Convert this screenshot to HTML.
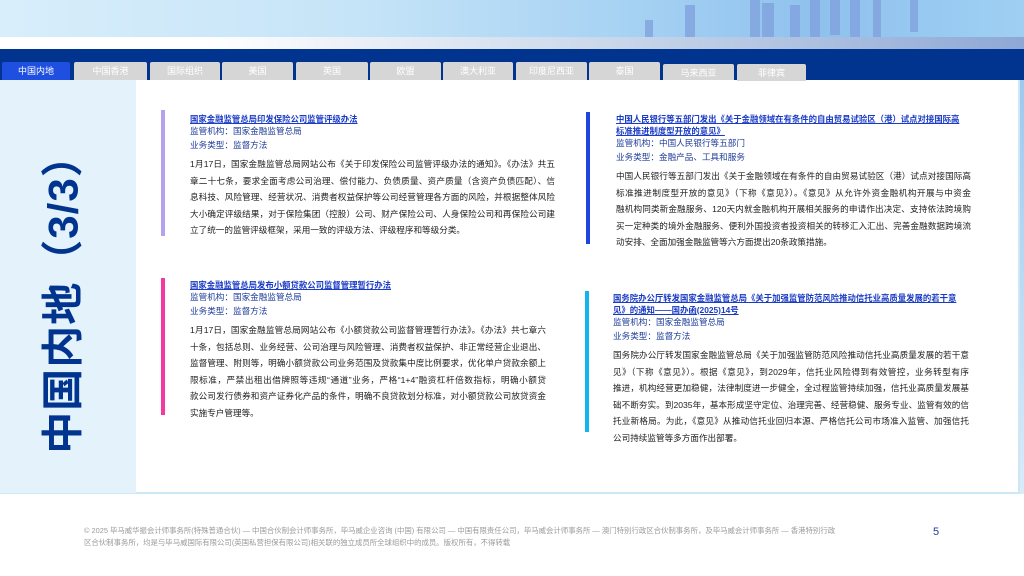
<!DOCTYPE html>
<html><head><meta charset="utf-8"><style>
*{margin:0;padding:0;box-sizing:border-box}
body{width:1024px;height:576px;overflow:hidden;background:#fff;position:relative;font-family:"Liberation Sans","Noto Sans CJK SC",sans-serif}
.hdr{position:absolute;left:0;top:0;width:1024px;height:44px;background:linear-gradient(90deg,#d8eefb 0%,#c6e4f8 35%,#a8d3f3 60%,#8fc1ee 80%,#9fd0f3 100%)}
.fade{position:absolute;left:0;top:37px;width:1024px;height:12px;background:linear-gradient(90deg,#fff 0%,#fff 20%,#c9d7ea 60%,#8ea8d6 100%)}
.bar{position:absolute;background:#7f9fdc;opacity:.75}
.dark{position:absolute;left:0;top:49px;width:1024px;height:31px;background:#00348f}
.tab{position:absolute;top:62px;height:18px;background:#d6d6d6;color:#fff;font-size:9px;text-align:center;line-height:18px;border-radius:2px 2px 0 0}
.tab.on{background:#1f4fe0;top:62px}
.left{position:absolute;left:0;top:80px;width:136px;height:413px;background:#e3f2fb}
.main{position:absolute;left:0;top:80px;width:1020px;height:414px;border-bottom:2px solid #cfe6f6;border-right:2px solid #cfe6f6}
.rstrip{position:absolute;left:1020px;top:80px;width:4px;height:414px;background:linear-gradient(#9cc9ef,#d9ecfa)}
.vt{position:absolute;left:60px;top:294px;transform:translate(-50%,-50%) rotate(-90deg);white-space:nowrap;font-size:42px;font-weight:bold;color:#00348f;letter-spacing:1px}
.card{position:absolute;font-size:8.6px;color:#222}
.bd{position:absolute;width:4px}
.t{color:#1a3bc4;text-decoration:underline;font-size:8.4px;line-height:12px;font-weight:bold;white-space:nowrap}
.m{color:#1f3d99;font-size:8.6px;line-height:13.5px;white-space:nowrap}
.b{margin-top:4px;font-size:8.6px;line-height:16.6px}
.b div{text-align:justify;text-align-last:justify;white-space:nowrap}
.b div.l{text-align-last:left}
.foot{position:absolute;left:84px;top:525px;width:760px;font-size:7.4px;line-height:11.5px;color:#9a9a9a;white-space:nowrap}
.pg{position:absolute;left:933px;top:526px;font-size:11px;color:#1f3d99}
</style></head><body>
<div class="hdr"></div>
<div class="bar" style="left:645px;top:20px;width:8px;height:24px"></div>
<div class="bar" style="left:685px;top:5px;width:10px;height:39px"></div>
<div class="bar" style="left:750px;top:0;width:10px;height:44px"></div>
<div class="bar" style="left:762px;top:3px;width:12px;height:41px"></div>
<div class="bar" style="left:790px;top:5px;width:10px;height:39px"></div>
<div class="bar" style="left:810px;top:0;width:10px;height:44px"></div>
<div class="bar" style="left:830px;top:0;width:10px;height:35px"></div>
<div class="bar" style="left:850px;top:0;width:10px;height:40px"></div>
<div class="bar" style="left:873px;top:0;width:8px;height:38px"></div>
<div class="bar" style="left:910px;top:0;width:8px;height:32px"></div>
<div class="fade"></div>
<div class="dark"></div>
<div class="tab on" style="left:2px;width:68px">中国内地</div>
<div class="tab" style="left:74px;width:73px">中国香港</div>
<div class="tab" style="left:150px;width:70px">国际组织</div>
<div class="tab" style="left:222px;width:71px">美国</div>
<div class="tab" style="left:296px;width:72px">英国</div>
<div class="tab" style="left:370px;width:71px">欧盟</div>
<div class="tab" style="left:443px;width:70px">澳大利亚</div>
<div class="tab" style="left:516px;width:71px">印度尼西亚</div>
<div class="tab" style="left:589px;width:71px">泰国</div>
<div class="tab" style="left:663px;width:71px;top:64px;height:16px">马来西亚</div>
<div class="tab" style="left:737px;width:69px;top:64px;height:17px">菲律宾</div>
<div class="main"></div>
<div class="left"></div>
<div class="rstrip"></div>
<div class="vt">中国内地（3/3）</div>

<div class="bd" style="left:161px;top:110px;height:126px;background:#b6a1ee"></div>
<div class="card" style="left:190px;top:113px;width:365px">
<div class="t">国家金融监管总局印发保险公司监管评级办法</div>
<div class="m">监管机构：国家金融监管总局</div>
<div class="m">业务类型：监督方法</div>
<div class="b"><div>1月17日，国家金融监管总局网站公布《关于印发保险公司监管评级办法的通知》。《办法》共五</div><div>章二十七条，要求全面考虑公司治理、偿付能力、负债质量、资产质量（含资产负债匹配）、信</div><div>息科技、风险管理、经营状况、消费者权益保护等公司经营管理各方面的风险，并根据整体风险</div><div>大小确定评级结果，对于保险集团（控股）公司、财产保险公司、人身保险公司和再保险公司建</div><div class="l">立了统一的监管评级框架，采用一致的评级方法、评级程序和等级分类。</div></div>
</div>

<div class="bd" style="left:586px;top:112px;height:132px;background:#1f45e0"></div>
<div class="card" style="left:616px;top:113px;width:355px">
<div class="t">中国人民银行等五部门发出《关于金融领域在有条件的自由贸易试验区（港）试点对接国际高<br>标准推进制度型开放的意见》</div>
<div class="m">监管机构：中国人民银行等五部门</div>
<div class="m">业务类型：金融产品、工具和服务</div>
<div class="b"><div>中国人民银行等五部门发出《关于金融领域在有条件的自由贸易试验区（港）试点对接国际高</div><div>标准推进制度型开放的意见》（下称《意见》）。《意见》从允许外资金融机构开展与中资金</div><div>融机构同类新金融服务、120天内就金融机构开展相关服务的申请作出决定、支持依法跨境购</div><div>买一定种类的境外金融服务、便利外国投资者投资相关的转移汇入汇出、完善金融数据跨境流</div><div class="l">动安排、全面加强金融监管等六方面提出20条政策措施。</div></div>
</div>

<div class="bd" style="left:161px;top:278px;height:137px;background:#f23aa0"></div>
<div class="card" style="left:190px;top:279px;width:356px">
<div class="t">国家金融监管总局发布小额贷款公司监督管理暂行办法</div>
<div class="m">监管机构：国家金融监管总局</div>
<div class="m">业务类型：监督方法</div>
<div class="b"><div>1月17日，国家金融监管总局网站公布《小额贷款公司监督管理暂行办法》。《办法》共七章六</div><div>十条，包括总则、业务经营、公司治理与风险管理、消费者权益保护、非正常经营企业退出、</div><div>监督管理、附则等，明确小额贷款公司业务范围及贷款集中度比例要求，优化单户贷款余额上</div><div>限标准，严禁出租出借牌照等违规“通道”业务，严格“1+4”融资杠杆倍数指标，明确小额贷</div><div>款公司发行债券和资产证券化产品的条件，明确不良贷款划分标准，对小额贷款公司放贷资金</div><div class="l">实施专户管理等。</div></div>
</div>

<div class="bd" style="left:585px;top:291px;height:141px;background:#14b4ef"></div>
<div class="card" style="left:613px;top:292px;width:356px">
<div class="t">国务院办公厅转发国家金融监管总局《关于加强监管防范风险推动信托业高质量发展的若干意<br>见》的通知——国办函(2025)14号</div>
<div class="m">监管机构：国家金融监管总局</div>
<div class="m">业务类型：监督方法</div>
<div class="b"><div>国务院办公厅转发国家金融监管总局《关于加强监管防范风险推动信托业高质量发展的若干意</div><div>见》（下称《意见》）。根据《意见》，到2029年，信托业风险得到有效管控，业务转型有序</div><div>推进，机构经营更加稳健，法律制度进一步健全，全过程监管持续加强，信托业高质量发展基</div><div>础不断夯实。到2035年，基本形成坚守定位、治理完善、经营稳健、服务专业、监管有效的信</div><div>托业新格局。为此，《意见》从推动信托业回归本源、严格信托公司市场准入监管、加强信托</div><div class="l">公司持续监管等多方面作出部署。</div></div>
</div>

<div class="foot">© 2025 毕马威华振会计师事务所(特殊普通合伙) — 中国合伙制会计师事务所，毕马威企业咨询 (中国) 有限公司 — 中国有限责任公司，毕马威会计师事务所 — 澳门特别行政区合伙制事务所，及毕马威会计师事务所 — 香港特别行政<br>区合伙制事务所，均是与毕马威国际有限公司(英国私营担保有限公司)相关联的独立成员所全球组织中的成员。版权所有，不得转载</div>
<div class="pg">5</div>
</body></html>
